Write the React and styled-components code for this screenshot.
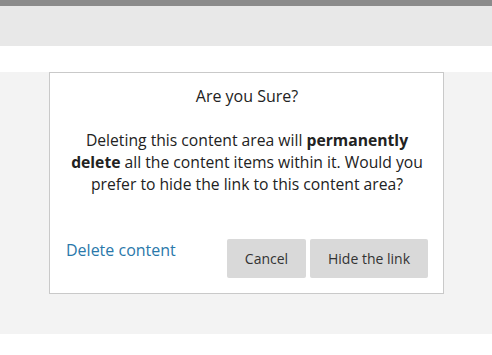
import React from "react";
import styled, { createGlobalStyle } from "styled-components";

const Global = createGlobalStyle`
  html, body { margin: 0; padding: 0; background: #ffffff; }
  body { font-family: "Open Sans", "Liberation Sans", sans-serif; }
`;

const TopBar = styled.div`
  height: 6px;
  background: #8b8b8b;
`;

const Header = styled.div`
  height: 40px;
  background: #e8e8e8;
`;

const Gap = styled.div`
  height: 26px;
  background: #ffffff;
`;

const Stage = styled.div`
  height: 262px;
  background: #f3f3f3;
  padding-left: 49px;
  box-sizing: border-box;
`;

const Dialog = styled.div`
  width: 395px;
  height: 222px;
  box-sizing: border-box;
  background: #ffffff;
  border: 1px solid #c9c9c9;
  display: flex;
  flex-direction: column;
  padding: 12px 15px 15px 16px;
`;

const Title = styled.div`
  text-align: center;
  font-size: 16px;
  line-height: 22px;
  color: #222;
`;

const Body = styled.p`
  margin: 22px 0 0;
  text-align: center;
  font-size: 15.7px;
  line-height: 22px;
  color: #222;
  b { font-weight: 700; }
`;

const Footer = styled.div`
  margin-top: auto;
  display: flex;
  align-items: flex-start;
  justify-content: space-between;
`;

const Link = styled.a`
  font-size: 16px;
  line-height: 22px;
  color: #2a78aa;
  text-decoration: none;
`;

const Buttons = styled.div`
  display: flex;
  gap: 4px;
`;

const Button = styled.button`
  height: 39px;
  width: ${(p) => p.$w}px;
  border: none;
  border-radius: 2px;
  background: #d9d9d9;
  color: #333;
  font-family: "Open Sans", "Liberation Sans", sans-serif;
  font-size: 14px;
  padding: 0;
`;

export default function App() {
  return (
    <>
      <Global />
      <TopBar />
      <Header />
      <Gap />
      <Stage>
        <Dialog>
          <Title>Are you Sure?</Title>
          <Body>
            Deleting this content area will <b>permanently</b>
            <br />
            <b>delete</b> all the content items within it. Would you
            <br />
            prefer to hide the link to this content area?
          </Body>
          <Footer>
            <Link href="#">Delete content</Link>
            <Buttons>
              <Button $w={79}>Cancel</Button>
              <Button $w={118}>Hide the link</Button>
            </Buttons>
          </Footer>
        </Dialog>
      </Stage>
    </>
  );
}
